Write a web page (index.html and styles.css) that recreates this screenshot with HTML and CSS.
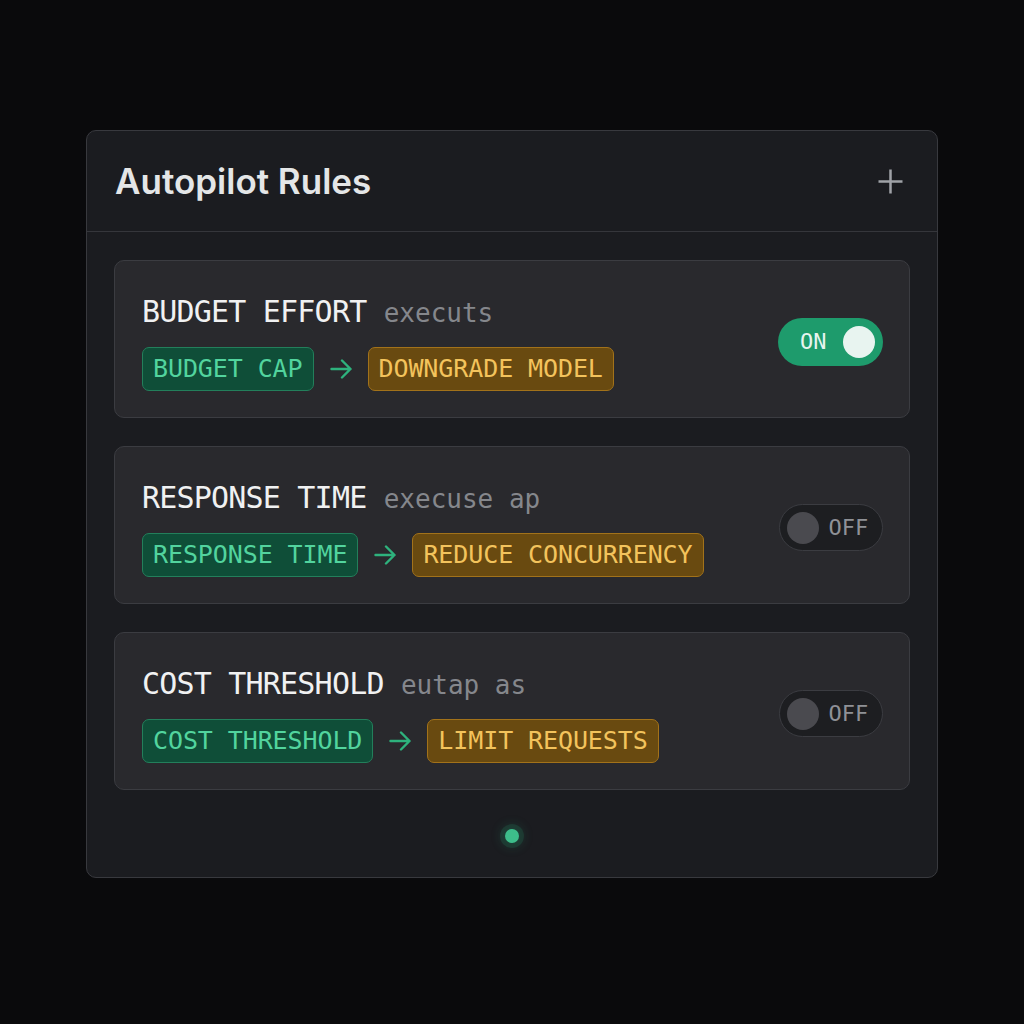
FILE: index.html
```html
<!DOCTYPE html>
<html lang="en">
<head>
<meta charset="utf-8">
<title>Autopilot Rules</title>
<link rel="stylesheet" href="styles.css">
</head>
<body>
<main class="page">
  <section class="panel">
    <header class="panel-head">
      <h1 class="panel-title">Autopilot Rules</h1>
      <button class="add-btn" aria-label="Add rule">
        <svg width="25" height="25" viewBox="0 0 25 25" fill="none" stroke="currentColor" stroke-width="2.5" stroke-linecap="butt">
          <path d="M12.5 0.5v24M0.5 12.5h24"/>
        </svg>
      </button>
    </header>

    <div class="rules">
      <article class="rule">
        <div class="rule-body">
          <div class="rule-title">BUDGET EFFORT <span class="rule-sub">executs</span></div>
          <div class="flow">
            <span class="pill pill-green">BUDGET CAP</span>
            <svg class="arrow" width="22" height="20" viewBox="0 0 22 20" fill="none" stroke="currentColor" stroke-width="2.4" stroke-linecap="round" stroke-linejoin="round"><path d="M1.5 10h19M12 1.5l8.5 8.5-8.5 8.5"/></svg>
            <span class="pill pill-amber">DOWNGRADE MODEL</span>
          </div>
        </div>
        <div class="toggle toggle-on"><span class="toggle-label">ON</span><span class="knob"></span></div>
      </article>

      <article class="rule">
        <div class="rule-body">
          <div class="rule-title">RESPONSE TIME <span class="rule-sub">execuse ap</span></div>
          <div class="flow">
            <span class="pill pill-green">RESPONSE TIME</span>
            <svg class="arrow" width="22" height="20" viewBox="0 0 22 20" fill="none" stroke="currentColor" stroke-width="2.4" stroke-linecap="round" stroke-linejoin="round"><path d="M1.5 10h19M12 1.5l8.5 8.5-8.5 8.5"/></svg>
            <span class="pill pill-amber">REDUCE CONCURRENCY</span>
          </div>
        </div>
        <div class="toggle toggle-off"><span class="knob"></span><span class="toggle-label">OFF</span></div>
      </article>

      <article class="rule">
        <div class="rule-body">
          <div class="rule-title">COST THRESHOLD <span class="rule-sub">eutap as</span></div>
          <div class="flow">
            <span class="pill pill-green">COST THRESHOLD</span>
            <svg class="arrow" width="22" height="20" viewBox="0 0 22 20" fill="none" stroke="currentColor" stroke-width="2.4" stroke-linecap="round" stroke-linejoin="round"><path d="M1.5 10h19M12 1.5l8.5 8.5-8.5 8.5"/></svg>
            <span class="pill pill-amber">LIMIT REQUESTS</span>
          </div>
        </div>
        <div class="toggle toggle-off"><span class="knob"></span><span class="toggle-label">OFF</span></div>
      </article>
    </div>

    <footer class="panel-foot">
      <span class="status-dot"></span>
    </footer>
  </section>
</main>
</body>
</html>
```

FILE: styles.css
```css
* { box-sizing: border-box; }

html, body {
  margin: 0;
  padding: 0;
  background: #0a0a0c;
}

.page {
  width: 1024px;
  height: 1024px;
  padding-top: 130px;
  display: flex;
  justify-content: center;
  align-items: flex-start;
  font-family: "DejaVu Sans Mono", "Liberation Mono", monospace;
}

.panel {
  width: 852px;
  background: #1b1c20;
  border: 1px solid #38393e;
  border-radius: 10px;
  overflow: hidden;
}

.panel-head {
  height: 101px;
  display: flex;
  align-items: center;
  justify-content: space-between;
  padding: 0 34px 0 28px;
  border-bottom: 1px solid #35363b;
}

.panel-title {
  margin: 0;
  font-family: Inter, "Noto Sans", sans-serif;
  font-weight: 600;
  font-size: 35px;
  letter-spacing: 0;
  color: #e4e6e7;
}

.add-btn {
  background: none;
  border: 0;
  padding: 0;
  width: 25px;
  height: 25px;
  color: #a0a2a7;
  display: flex;
}

.rules {
  padding: 28px 27px 0;
  display: flex;
  flex-direction: column;
  gap: 28px;
}

.rule {
  display: flex;
  align-items: center;
  justify-content: space-between;
  background: #29292d;
  border: 1px solid #3b3c41;
  border-radius: 10px;
  padding: 31px 26px 26px 27px;
}

.rule-title {
  font-size: 30px;
  line-height: 40px;
  height: 40px;
  letter-spacing: -0.8px;
  color: #f0f1f2;
  white-space: pre;
}

.rule-sub {
  font-size: 26px;
  line-height: 1;
  letter-spacing: 0;
  color: #85878c;
}

.flow {
  margin-top: 15px;
  display: flex;
  align-items: center;
  gap: 16px;
}

.arrow {
  color: #2eb27d;
}

.pill {
  display: inline-block;
  height: 44px;
  line-height: 42px;
  padding: 0 10px;
  font-size: 25px;
  letter-spacing: -0.1px;
  border-radius: 7px;
  white-space: pre;
}

.pill-green {
  background: #0f4e38;
  border: 1px solid #237f5b;
  color: #52d49e;
}

.pill-amber {
  background: #694a10;
  border: 1px solid #a2721a;
  color: #f3c35c;
}

.toggle {
  display: flex;
  align-items: center;
  height: 48px;
  border-radius: 24px;
  font-size: 22px;
}

.toggle-on {
  width: 105px;
  background: #1e9b6c;
  padding: 0 8px 0 22px;
  justify-content: space-between;
  color: #e7f4ef;
}

.toggle-on .knob {
  width: 32px;
  height: 32px;
  border-radius: 50%;
  background: #e8f4f0;
}

.toggle-off {
  width: 104px;
  height: 47px;
  background: #1d1e21;
  border: 1.5px solid #3b3c41;
  padding: 0 0 0 6.5px;
  gap: 10px;
  color: #8f9196;
}

.toggle-off .knob {
  width: 32px;
  height: 32px;
  border-radius: 50%;
  background: #4a4a4f;
}

.panel-foot {
  display: flex;
  justify-content: center;
  padding: 39px 0 34px;
}

.status-dot {
  width: 14px;
  height: 14px;
  border-radius: 50%;
  background: #3dbd8a;
  box-shadow: 0 0 0 5px rgba(40, 150, 105, 0.18), 0 0 10px 6px rgba(40, 150, 105, 0.15);
}
```
